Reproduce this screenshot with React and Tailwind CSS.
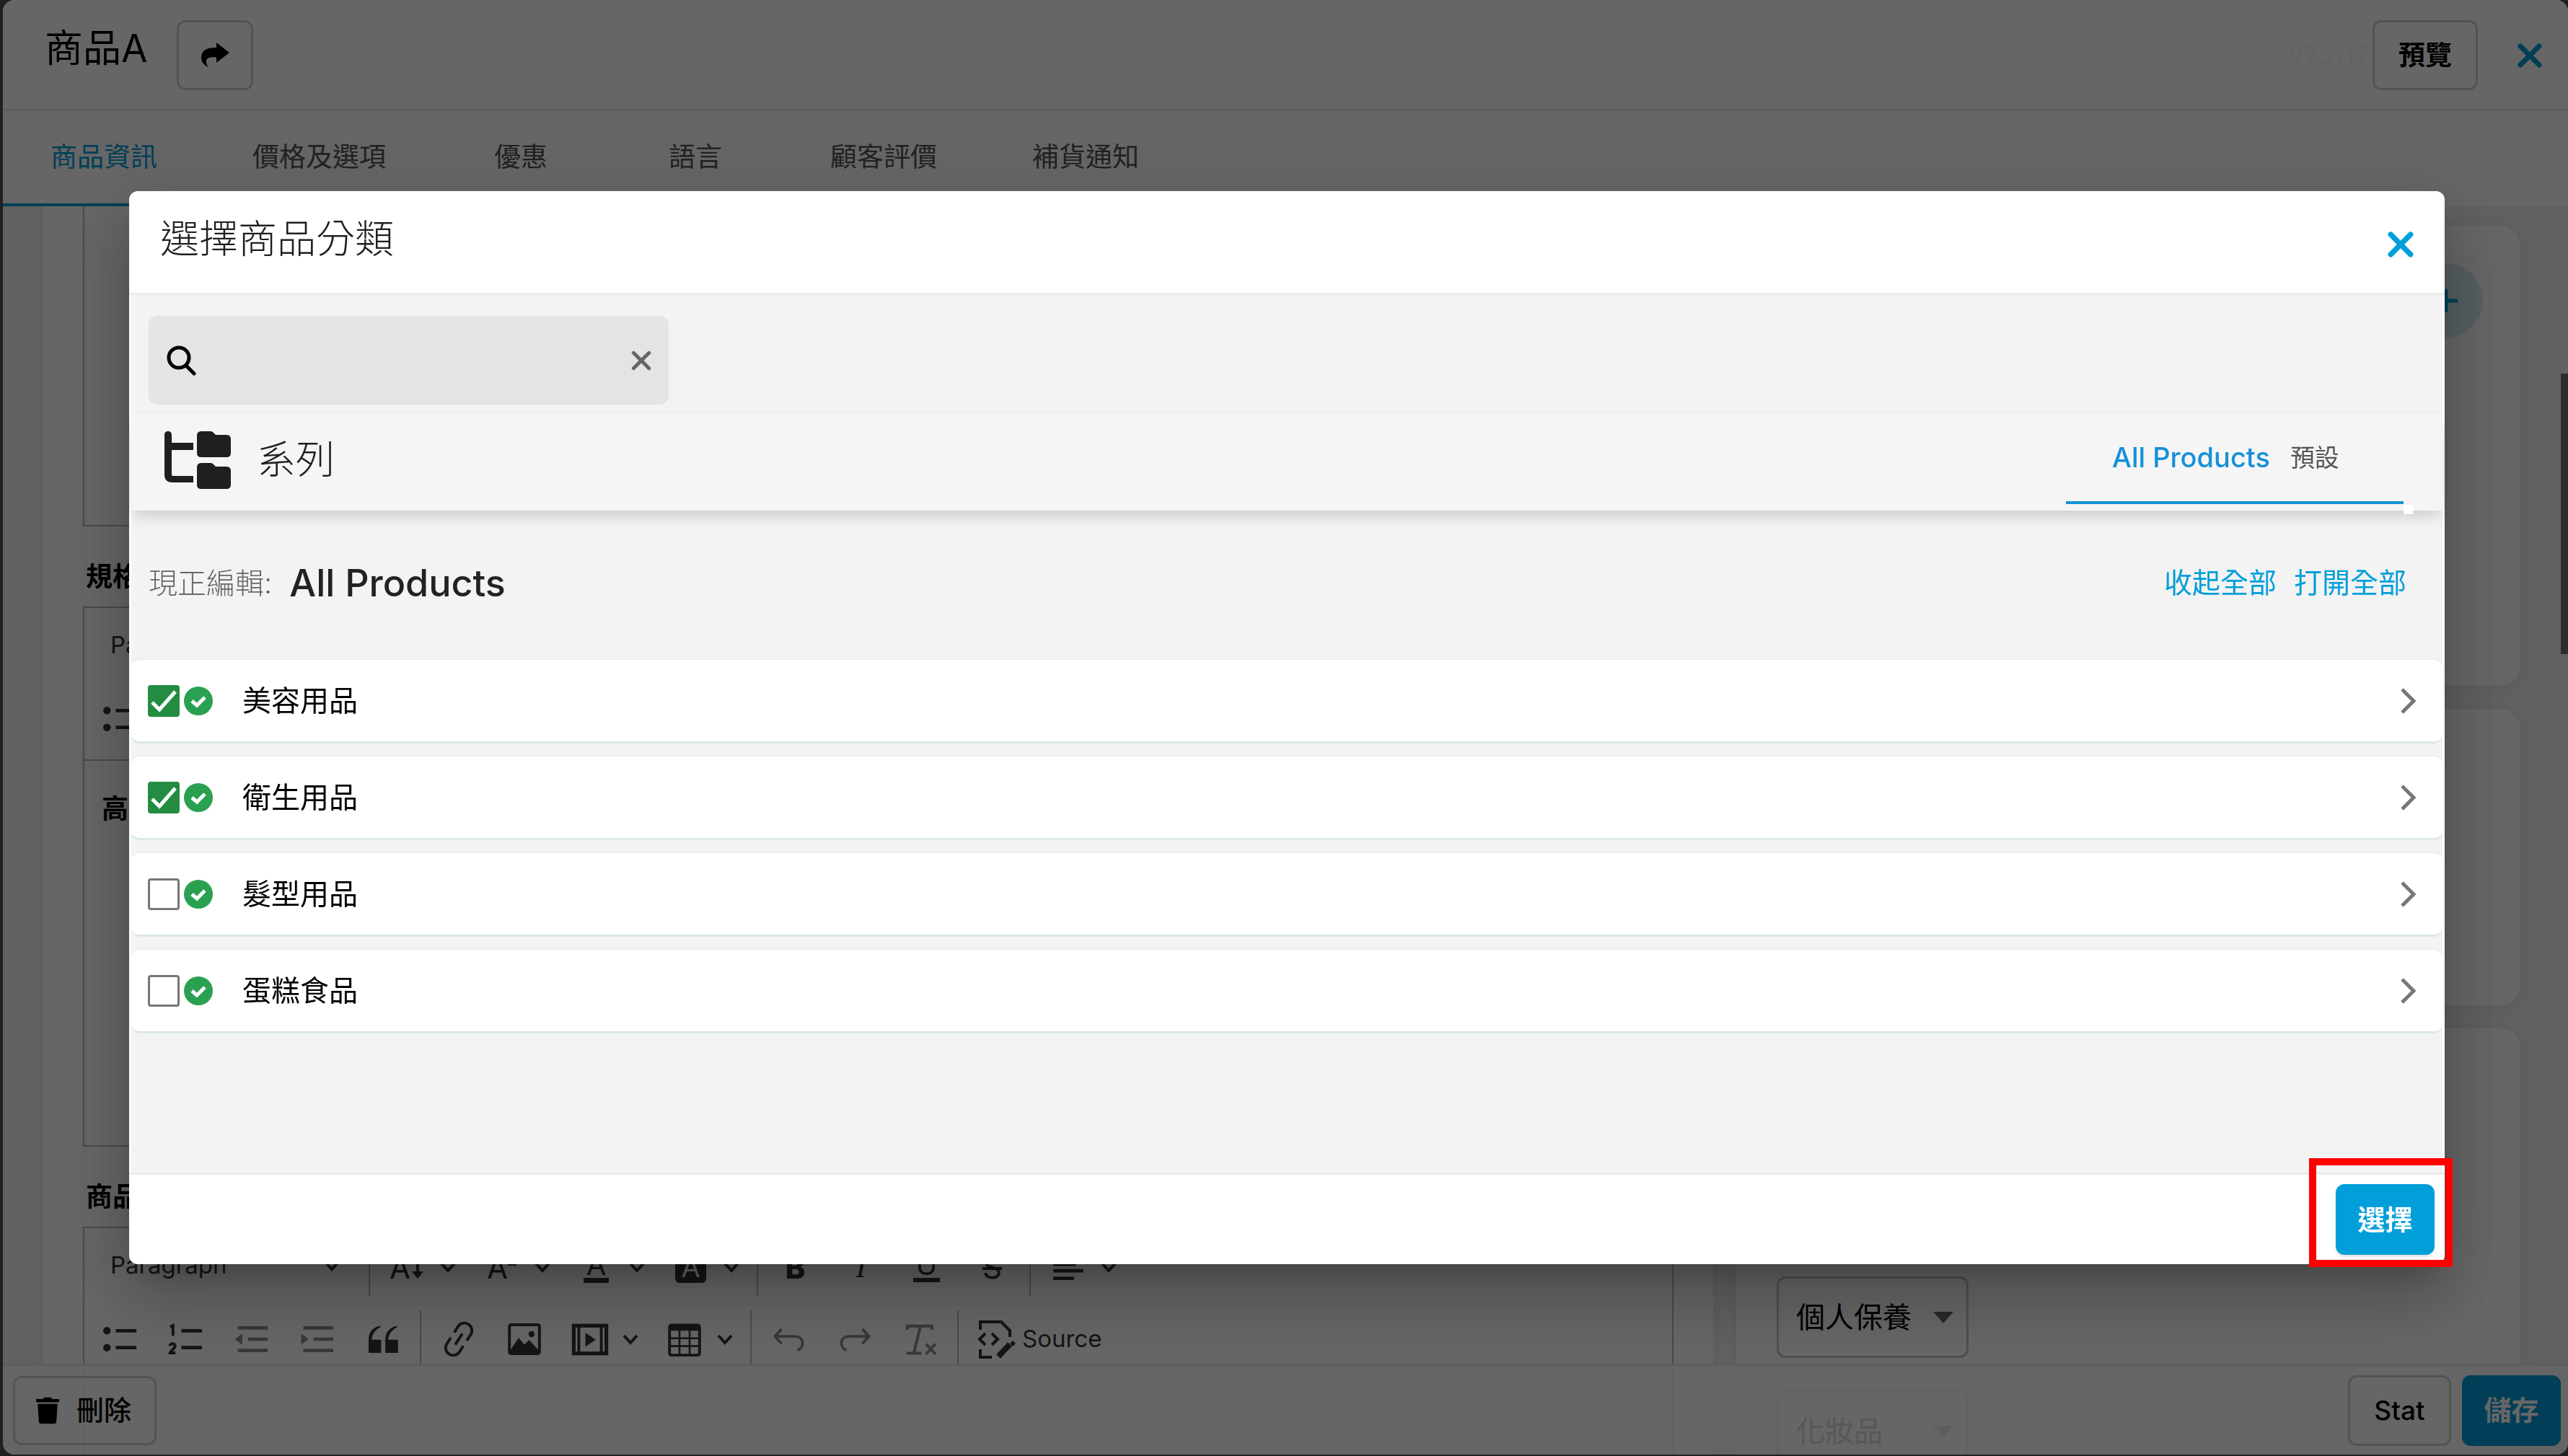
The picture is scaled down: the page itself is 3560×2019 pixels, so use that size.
import React, { useState } from 'react';
import { FaTrash } from 'react-icons/fa';

const TABS = ['商品資訊', '價格及選項', '優惠', '語言', '顧客評價', '補貨通知'];

const CATEGORIES = [
    { id: 'beauty', name: '美容用品', checked: true },
    { id: 'hygiene', name: '衛生用品', checked: true },
    { id: 'hair', name: '髮型用品', checked: false },
    { id: 'cake', name: '蛋糕食品', checked: false },
];

const CloseIcon = ({ className, width = 7 }) => (
    <svg className={className} viewBox="0 0 34 34" fill="none" stroke="currentColor" strokeWidth={width} strokeLinecap="round">
        <path d="M4 4l26 26M30 4L4 30" />
    </svg>
);

const ShareIcon = () => (
    <svg className="h-9 w-10" viewBox="0 0 40 36" fill="currentColor">
        <path d="M22 0l18 14-18 14v-7.500c-8-.8-13 .5-14 4.500-.6 3 .6 6 3 9.500C4 31 1 26 1 21 1 11 8 7 22 7z" />
    </svg>
);

const SearchIcon = () => (
    <svg className="h-[42px] w-[42px] shrink-0" viewBox="0 0 42 42" fill="none" stroke="currentColor" strokeWidth="5" strokeLinecap="round">
        <circle cx="18" cy="17" r="14" />
        <path d="M28 28l11 11" />
    </svg>
);

const ChevronDown = () => (
    <svg className="w-[22px] h-[22px] shrink-0" viewBox="0 0 22 22" fill="none" stroke="currentColor" strokeWidth="4">
        <path d="M2 6l9 10 9-10" />
    </svg>
);

const Icon = ({ children }) => (
    <svg className="w-[52px] h-[52px] shrink-0" viewBox="0 0 20 20" fill="none" stroke="currentColor" strokeWidth="1.5">
        {children}
    </svg>
);

const ToolButton = ({ label, muted, menu, children }) => (
    <button aria-label={label} className={`flex items-center h-20 ${muted ? 'text-[#8c8c8c]' : 'text-[#333333]'}`}>
        <span className="flex w-[91px] items-center justify-center">{children}</span>
        {menu && <span className="flex w-10"><ChevronDown /></span>}
    </button>
);

const Separator = () => <span className="mx-[6px] h-20 w-[2px] bg-[#b8b8b8]" />;

const FolderTree = () => (
    <svg className="h-20 w-[92px] shrink-0 text-[#1f1f1f]" viewBox="0 0 92 80" fill="currentColor">
        <path d="M0 5q0-5 5-5t5 5v11h30v10H10v34q0 2 2 2h28v9H11Q0 71 0 60z" />
        <path d="M45 6q0-6 6-6h13q3 0 5 3l2 2h15q6 0 6 6v19q0 6-6 6H51q-6 0-6-6z" />
        <path d="M45 50q0-6 6-6h13q3 0 5 3l2 2h15q6 0 6 6v19q0 6-6 6H51q-6 0-6-6z" />
    </svg>
);

const Toolbar = () => (
    <div className="flex flex-col gap-5 px-1 pt-[14px] pb-4 text-[33px]">
        <div className="flex items-center">
            <button className="flex h-20 w-96 items-center justify-between pr-[34px] pb-1 pl-8 text-[#333333]">
                Paragraph
                <ChevronDown />
            </button>
            <Separator />
            <ToolButton label="Font size" menu>
                <span className="text-[42px]">A</span>
                <svg className="h-8 w-5" viewBox="0 0 20 32" fill="currentColor"><path d="M8 0h4v22h6l-8 10L2 22h6z" /></svg>
            </ToolButton>
            <ToolButton label="Font family" menu>
                <span className="text-[42px]">A</span>
                <svg className="h-8 w-3" viewBox="0 0 12 32" fill="currentColor"><path d="M0 10h12v4H0z" /></svg>
            </ToolButton>
            <ToolButton label="Font color" menu>
                <span className="border-b-[7px] border-current px-1 text-[40px] leading-9">A</span>
            </ToolButton>
            <ToolButton label="Highlight" menu>
                <span className="rounded-md bg-[#333333] px-2 text-[38px] leading-[44px] text-white">A</span>
            </ToolButton>
            <Separator />
            <ToolButton label="Bold"><span className="text-[42px] font-extrabold">B</span></ToolButton>
            <ToolButton label="Italic">
                <span className="font-['Liberation_Serif',serif] text-[44px] italic">I</span>
            </ToolButton>
            <ToolButton label="Underline">
                <span className="border-b-[6px] border-current px-1 text-[40px] leading-9">U</span>
            </ToolButton>
            <ToolButton label="Strikethrough"><span className="text-[42px] line-through">S</span></ToolButton>
            <Separator />
            <ToolButton label="Text alignment" menu>
                <Icon><path strokeWidth="1.800" d="M2 5h16M2 8.500h12M2 12h16M2 16h11" /></Icon>
            </ToolButton>
        </div>
        <div className="flex items-center">
            <ToolButton label="Bulleted list">
                <Icon>
                    <path d="M7.500 5.500h11M7.500 14.500h11" strokeWidth="1.800" />
                    <circle cx="2.800" cy="5.500" r="2" fill="currentColor" stroke="none" />
                    <circle cx="2.800" cy="14.500" r="2" fill="currentColor" stroke="none" />
                </Icon>
            </ToolButton>
            <ToolButton label="Numbered list">
                <Icon>
                    <path d="M7.500 5.500h11M7.500 14.500h11" strokeWidth="1.800" />
                    <path d="M1.500 3.500l1.500-.8V8.200M1.300 13.600c.2-1.800 3.200-1.500 2.800.2C3.800 15.200 2 15.800 1.500 17.300H4.300" />
                </Icon>
            </ToolButton>
            <ToolButton label="Decrease indent" muted>
                <Icon>
                    <path d="M2.500 4h16M8 10h10.500M2.500 16h16" strokeWidth="1.800" />
                    <path d="M5 7v6L1 10z" fill="currentColor" stroke="none" />
                </Icon>
            </ToolButton>
            <ToolButton label="Increase indent" muted>
                <Icon>
                    <path d="M2.500 4h16M8 10h10.500M2.500 16h16" strokeWidth="1.800" />
                    <path d="M1.300 7v6L5.300 10z" fill="currentColor" stroke="none" />
                </Icon>
            </ToolButton>
            <ToolButton label="Block quote">
                <Icon>
                    <path
                        stroke="none"
                        fill="currentColor"
                        d="M4 10.300h5v7H2.300v-6.800C2.300 6.500 4.200 3.800 8.600 2.900v.7C5.600 5.200 4.200 7.500 4 10.300zM12.700 10.300h5.300v7h-6.800v-6.800c0-4 2-6.700 6.300-7.600v.7c-2.900 1.600-4.500 3.900-4.800 6.700z"
                    />
                </Icon>
            </ToolButton>
            <Separator />
            <ToolButton label="Link">
                <Icon>
                    <g transform="rotate(-57 10 10)">
                        <path d="M8.300 6H4.500a4 4 0 0 0 0 8h3.800M11.700 6h3.800a4 4 0 0 1 0 8h-3.800M6.500 10h7" />
                    </g>
                </Icon>
            </ToolButton>
            <ToolButton label="Insert image">
                <Icon>
                    <rect x="2" y="2.300" width="16" height="15.400" rx="1" />
                    <path d="M3 16.500l4-6 3 3.500 2.500-2.500 4.500 5z" fill="currentColor" />
                    <circle cx="13.800" cy="7.300" r="1.600" fill="currentColor" stroke="none" />
                </Icon>
            </ToolButton>
            <ToolButton label="Insert media" menu>
                <Icon>
                    <rect x="1.300" y="2.800" width="17.400" height="14.800" strokeWidth="2" />
                    <path d="M4 3v14.500M16 3v14.500" />
                    <path d="M7.500 6.500v7.500l5.500-3.700z" fill="currentColor" stroke="none" />
                </Icon>
            </ToolButton>
            <ToolButton label="Insert table" menu>
                <Icon>
                    <rect x="2" y="2.500" width="16" height="16" rx="1" />
                    <path d="M2 4h16" strokeWidth="3" />
                    <path d="M2 9.500h16M2 13.700h16M7.300 5v13M12.700 5v13" strokeWidth="1" />
                </Icon>
            </ToolButton>
            <Separator />
            <ToolButton label="Undo" muted>
                <Icon><path d="M6 4.500L2.500 8.500 6 12.500M2.500 8.500H13c5 0 5.500 5.500 1.500 7.500" /></Icon>
            </ToolButton>
            <ToolButton label="Redo" muted>
                <Icon><path d="M14 4.500l3.500 4-3.500 4M17.500 8.500H7c-5 0-5.500 5.500-1.500 7.500" /></Icon>
            </ToolButton>
            <ToolButton label="Remove format" muted>
                <Icon>
                    <path d="M3 5V3h13v2M10 3L6.500 17.500M2.500 17.500h8M13 12.500l5 5.500M18 12.500l-5 5.500" />
                </Icon>
            </ToolButton>
            <Separator />
            <button className="flex h-20 items-center gap-2 pl-5 text-[#333333]">
                <svg className="h-[54px] w-[54px]" viewBox="0 0 54 54" fill="none" stroke="currentColor" strokeWidth="4">
                    <path d="M4 14V3h29l12 12v9M4 41v11h16" />
                    <path d="M11 19l-8 8 8 8M20 19l8 8-8 8" />
                    <path d="M29 51l16-17" strokeWidth="8" />
                    <path d="M47 31l4 4" strokeWidth="6" />
                </svg>
                Source
            </button>
        </div>
    </div>
);

const ProductSelect = ({ label, value }) => (
    <div className="grid w-[266px] items-center">
        <select
            aria-label={label}
            defaultValue={value}
            className="col-start-1 row-start-1 h-[113px] w-full appearance-none rounded-xl border-[3px] border-[#c4c4c4] bg-white pl-6 text-[40px] text-black"
        >
            <option>{value}</option>
        </select>
        <svg className="pointer-events-none col-start-1 row-start-1 mr-[21px] h-4 w-7 justify-self-end text-[#666666]" viewBox="0 0 28 16" fill="currentColor">
            <path d="M0 0h28L14 16z" />
        </svg>
    </div>
);

const ProductPage = () => (
    <div className="relative flex h-full flex-col overflow-hidden rounded-2xl bg-[#f2f2f2]">
        <header className="flex h-[154px] shrink-0 items-start justify-between border-b-[3px] border-[#ebebeb] bg-white pt-7 pr-9 pl-[58px]">
            <div className="flex items-start gap-10">
                <h1 className="text-[53px] leading-[78px]">商品A</h1>
                <button aria-label="分享" className="flex h-[97px] w-[106px] items-center justify-center rounded-xl border-[3px] border-[#cfcfcf]">
                    <ShareIcon />
                </button>
            </div>
            <div className="flex items-center">
                <span className="mr-1 text-[36px] text-[#f7f7f7]">#75117</span>
                <button className="h-[97px] w-[146px] rounded-xl border-[3px] border-[#cfcfcf] text-[37px] font-bold">預覽</button>
                <button aria-label="關閉" className="ml-[55px] text-[#009fda]">
                    <CloseIcon className="h-[34px] w-[34px]" />
                </button>
            </div>
        </header>

        <nav className="flex h-[132px] shrink-0 bg-white text-[37px]">
            {TABS.map((tab, i) => (
                <a
                    key={tab}
                    href="#"
                    className={`flex min-w-[242px] items-center justify-center border-b-4 px-[66px] ${
                        i === 0 ? 'border-[#009fda] text-[#009fda]' : 'border-transparent text-[#555555]'
                    }`}
                >
                    {tab}
                </a>
            ))}
        </nav>

        <main className="grid min-h-0 flex-1 grid-cols-[minmax(0,2315fr)_minmax(0,1087fr)] gap-8 overflow-hidden pr-[66px] pl-14">
            <section className="bg-white px-[55px] shadow-[0_2px_16px_rgba(0,0,0,0.08)]">
                <div className="h-[444px] border-2 border-t-0 border-[#b8b8b8]" />
                <h2 className="pt-[43px] pb-[14px] pl-1 text-[37px] leading-[54px] font-bold">規格</h2>
                <div className="h-[749px] border-2 border-[#b8b8b8]">
                    <div className="border-b-2 border-[#b8b8b8]"><Toolbar /></div>
                    <p className="px-6 pt-10 text-[37px] leading-[54px] font-bold">高</p>
                </div>
                <h2 className="pt-[43px] pb-[14px] pl-1 text-[37px] leading-[54px] font-bold">商品</h2>
                <div className="h-[749px] border-2 border-[#b8b8b8]">
                    <div className="border-b-2 border-[#b8b8b8]"><Toolbar /></div>
                </div>
            </section>

            <aside className="flex flex-col gap-8 pt-[27px]">
                <div className="flex h-[638px] shrink-0 justify-end rounded-[28px] bg-white p-[52px] shadow-[0_2px_24px_rgba(0,0,0,0.08)]">
                    <button aria-label="新增" className="flex h-[103px] w-[103px] items-center justify-center rounded-full bg-[#d6ecf5] text-[#009fda]">
                        <svg className="h-9 w-9" viewBox="0 0 36 36" stroke="currentColor" strokeWidth="5">
                            <path d="M18 2v32M2 18h32" />
                        </svg>
                    </button>
                </div>
                <div className="h-[411px] shrink-0 rounded-[28px] bg-white shadow-[0_2px_24px_rgba(0,0,0,0.08)]" />
                <div className="flex h-[760px] shrink-0 flex-col gap-[45px] rounded-[28px] bg-white px-14 pt-[344px] shadow-[0_2px_24px_rgba(0,0,0,0.08)]">
                    <ProductSelect label="主分類" value="個人保養" />
                    <ProductSelect label="次分類" value="化妝品" />
                </div>
            </aside>
        </main>

        {/* Page scroll thumb */}
        <div className="absolute top-[518px] right-0 h-[389px] w-[10px] bg-[#707070]" />

        <footer className="absolute inset-x-0 bottom-0 flex h-[126px] items-center justify-between border-t-[3px] border-[#ebebeb] bg-white/85 pr-[10px] pl-[14px]">
            <button className="flex h-24 w-[199px] items-center gap-6 rounded-xl border-[3px] border-[#cfcfcf] pl-[29px] text-[38px] font-medium">
                <FaTrash className="h-10 w-8" />
                刪除
            </button>
            <div className="flex gap-[15px]">
                <button className="h-[98px] w-[143px] rounded-xl border-[3px] border-[#cfcfcf] text-[37px] font-medium">Stat</button>
                <button className="h-[98px] w-[137px] rounded-xl bg-[#009fda] text-[38px] font-bold text-white">儲存</button>
            </div>
        </footer>
    </div>
);

const CategoryRow = ({ category, onToggle }) => (
    <li className="flex h-[118px] items-center justify-between rounded-xl border-t-2 border-b-[3px] border-t-[#e8f0f0] border-b-[#dbe8e8] bg-white pr-9 pl-[23px]">
        <label className="flex items-center gap-[6px]">
            <span className="grid h-11 w-11">
                <input
                    type="checkbox"
                    checked={category.checked}
                    onChange={() => onToggle(category.id)}
                    className="peer col-start-1 row-start-1 appearance-none rounded-sm border-[3px] border-[#767676] bg-white checked:border-[#248c40] checked:bg-[#248c40]"
                />
                <svg
                    className="pointer-events-none col-start-1 row-start-1 hidden h-11 w-11 text-white peer-checked:block"
                    viewBox="0 0 44 44"
                    fill="none"
                    stroke="currentColor"
                    strokeWidth="5"
                >
                    <path d="M6 24l10 10L38 9" />
                </svg>
            </span>
            <svg className="h-10 w-10" viewBox="0 0 40 40" fill="none">
                <circle cx="20" cy="20" r="20" fill="#2aa051" />
                <path d="M11 20l7 6 11-11" stroke="white" strokeWidth="5" />
            </svg>
            <span className="ml-[35px] text-[40px]">{category.name}</span>
        </label>
        <button aria-label={`打開${category.name}`} className="text-[#777777]">
            <svg className="h-9 w-[22px]" viewBox="0 0 22 36" fill="none" stroke="currentColor" strokeWidth="5">
                <path d="M2 2l16 16L2 34" />
            </svg>
        </button>
    </li>
);

const CategoryDialog = () => {
    const [categories, setCategories] = useState(CATEGORIES);
    const [query, setQuery] = useState('');

    const handleToggle = (id) => {
        setCategories(categories.map((c) => (c.id === id ? { ...c, checked: !c.checked } : c)));
    };

    return (
        <div
            role="dialog"
            aria-label="選擇商品分類"
            className="flex h-full w-full flex-col rounded-xl bg-white shadow-[0_25px_35px_-16px_rgba(0,0,0,0.2),0_55px_87px_7px_rgba(0,0,0,0.14),0_20px_105px_18px_rgba(0,0,0,0.12)]"
        >
            <div className="flex h-[144px] shrink-0 items-start justify-between border-b-[3px] border-[#ebebeb] px-[43px] pt-7 text-[#1f1f1f]">
                <h2 className="text-[54px] leading-[78px] font-light">選擇商品分類</h2>
                <button aria-label="關閉" className="pt-7 text-[#009fda]">
                    <CloseIcon className="h-[36px] w-[36px]" />
                </button>
            </div>

            <div className="mx-[3px] flex-1 bg-[#f3f3f3]">
                <div className="px-6 pt-[29px] pb-[13px]">
                    <div className="flex h-[123px] w-[721px] items-center rounded-xl bg-[#e4e4e4] px-6">
                        <SearchIcon />
                        <input
                            type="text"
                            aria-label="搜尋分類"
                            value={query}
                            onChange={(e) => setQuery(e.target.value)}
                            className="h-full min-w-0 flex-1 bg-transparent px-6 text-[40px] outline-none"
                        />
                        <button aria-label="清除" onClick={() => setQuery('')} className="text-[#666666]">
                            <CloseIcon className="h-7 w-7" width={6} />
                        </button>
                    </div>
                </div>

                <div className="flex h-[134px] items-start justify-between bg-[#f5f5f5] pr-[54px] pl-[46px] shadow-[0_10px_20px_-4px_rgba(0,0,0,0.18)]">
                    <div className="flex items-center gap-9 pt-6 text-[#1f1f1f]">
                        <FolderTree />
                        <h3 className="text-[54px] leading-[78px] font-light">系列</h3>
                    </div>
                    <a href="#" className="relative flex h-[125px] w-[468px] items-center gap-7 border-b-4 border-[#1490d8] pt-4 pb-4 pl-16">
                        <span className="text-[38px] font-medium text-[#1490d8]">All Products</span>
                        <span className="text-[34px] text-[#555555]">預設</span>
                        <span className="absolute top-[126px] left-full h-[13px] w-[13px] bg-white" />
                    </a>
                </div>

                <div className="flex h-[205px] items-center justify-between pr-[50px] pb-1 pl-6">
                    <p className="flex items-center gap-6">
                        <span className="text-[40px] font-light text-[#666666]">現正編輯:</span>
                        <span className="text-[52px] font-medium text-[#222222]">All Products</span>
                    </p>
                    <div className="flex gap-6 text-[39px] text-[#009fda]">
                        <button>收起全部</button>
                        <button>打開全部</button>
                    </div>
                </div>

                <ul className="flex flex-col gap-4">
                    {categories.map((category) => (
                        <CategoryRow key={category.id} category={category} onToggle={handleToggle} />
                    ))}
                </ul>
            </div>

            <div className="flex h-[127px] shrink-0 items-center justify-end border-t-[3px] border-[#ebebeb] pr-[14px]">
                <div className="relative">
                    <button className="h-[98px] w-[137px] rounded-xl bg-[#009fda] text-[38px] font-bold text-white shadow-md">選擇</button>
                    <div className="pointer-events-none absolute -top-9 -right-[25px] -bottom-[17px] -left-[37px] border-[10px] border-[#ff0000]" />
                </div>
            </div>
        </div>
    );
};

const App = () => (
    <div className="h-screen overflow-hidden bg-[#505050] pl-1 pb-[2px] font-[Inter,'Noto_Sans_CJK_TC',sans-serif] text-black">
        <ProductPage />
        <div className="fixed inset-0 bg-black/60 pt-[265px] pr-[171px] pb-[266px] pl-[179px]">
            <CategoryDialog />
        </div>
    </div>
);

export default App;
